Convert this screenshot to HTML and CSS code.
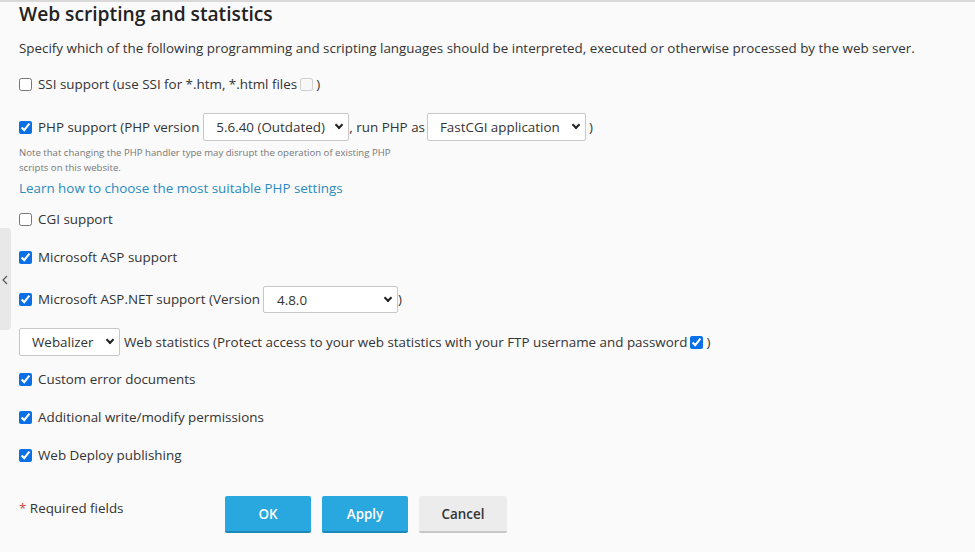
FILE: index.html
```html
<!DOCTYPE html>
<html>
<head>
<meta charset="utf-8">
<link rel="stylesheet" href="styles.css">
</head>
<body>
<div class="page">
  <div class="side-tab">
    <svg width="6" height="10" viewBox="0 0 6 10"><path d="M5 1 L1 5 L5 9" fill="none" stroke="#555" stroke-width="1.2"/></svg>
  </div>
  <form class="form">
    <h1 class="title">Web scripting and statistics</h1>
    <p class="desc">Specify which of the following programming and scripting languages should be interpreted, executed or otherwise processed by the web server.</p>

    <div class="row r-ssi">
      <input type="checkbox" class="cb">
      <span>SSI support (use SSI for *.htm, *.html files</span>
      <input type="checkbox" class="cb cb-inline" disabled>
      <span>)</span>
    </div>

    <div class="row r-php">
      <input type="checkbox" class="cb" checked>
      <span>PHP support (PHP version</span>
      <div class="select s-php">5.6.40 (Outdated)<span class="chev"></span></div>
      <span>, run PHP as</span>
      <div class="select s-handler">FastCGI application<span class="chev"></span></div>
      <span>)</span>
    </div>
    <p class="note">Note that changing the PHP handler type may disrupt the operation of existing PHP scripts on this website.</p>
    <a class="link" href="#">Learn how to choose the most suitable PHP settings</a>

    <div class="row r-cgi">
      <input type="checkbox" class="cb">
      <span>CGI support</span>
    </div>

    <div class="row r-gap">
      <input type="checkbox" class="cb" checked>
      <span>Microsoft ASP support</span>
    </div>

    <div class="row r-net">
      <input type="checkbox" class="cb" checked>
      <span>Microsoft ASP.NET support (Version</span>
      <div class="select s-net">4.8.0<span class="chev"></span></div>
      <span class="paren-tight">)</span>
    </div>

    <div class="row r-stats">
      <div class="select s-stats">Webalizer<span class="chev"></span></div>
      <span>Web statistics (Protect access to your web statistics with your FTP username and password</span>
      <input type="checkbox" class="cb cb-inline" checked>
      <span>)</span>
    </div>

    <div class="row r-custom">
      <input type="checkbox" class="cb" checked>
      <span>Custom error documents</span>
    </div>

    <div class="row r-gap">
      <input type="checkbox" class="cb" checked>
      <span>Additional write/modify permissions</span>
    </div>

    <div class="row r-gap">
      <input type="checkbox" class="cb" checked>
      <span>Web Deploy publishing</span>
    </div>

    <div class="footer">
      <div class="required"><span class="star">*</span> Required fields</div>
      <div class="buttons">
        <button type="button" class="btn btn-primary">OK</button>
        <button type="button" class="btn btn-primary">Apply</button>
        <button type="button" class="btn btn-default">Cancel</button>
      </div>
    </div>
  </form>
</div>
</body>
</html>
```

FILE: styles.css
```css
* { box-sizing: border-box; }

html, body {
  margin: 0;
  padding: 0;
  background: #fafafa;
}

body {
  font-family: "Open Sans", "Liberation Sans", sans-serif;
  color: #222;
  font-size: 13.4px;
  width: 975px;
  height: 552px;
  overflow: hidden;
}

.page {
  position: relative;
  border-top: 2px solid #d9d9d9;
  height: 552px;
}

.side-tab {
  position: absolute;
  left: 0;
  top: 226px;
  width: 11px;
  height: 102px;
  background: #e8e8e8;
  border-radius: 0 4px 4px 0;
  display: flex;
  align-items: center;
  justify-content: center;
  padding-right: 2px;
  padding-top: 2px;
}

.form {
  padding-left: 19px;
  display: flex;
  flex-direction: column;
  align-items: flex-start;
}

.title {
  margin: 0;
  font-size: 19.2px;
  line-height: 24px;
  font-weight: 600;
  color: #222;
}

.desc {
  margin: 12px 0 0;
  line-height: 20px;
  color: #333;
}

.row {
  display: flex;
  align-items: center;
  height: 20px;
  white-space: nowrap;
  color: #333;
}

.r-ssi { margin-top: 16px; }
.r-php { margin-top: 19px; height: 28px; }
.r-cgi { margin-top: 11px; }
.r-gap { margin-top: 18px; }
.r-net { margin-top: 18px; height: 28px; }
.r-stats { margin-top: 15px; height: 28px; }
.r-custom { margin-top: 13px; }

.cb {
  width: 13px;
  height: 13px;
  margin: 0 6px 0 0;
  accent-color: #0b6fe8;
  flex: none;
}

.cb-inline {
  margin: 0 3px 0 3px;
}

.select {
  position: relative;
  height: 28px;
  background: #fff;
  border: 1px solid #c8c8c8;
  border-radius: 2px;
  font-size: 13.4px;
  line-height: 26px;
  color: #333;
  padding-left: 12px;
  flex: none;
}

.chev {
  position: absolute;
  right: 6px;
  top: 11px;
  width: 6px;
  height: 6px;
  border-right: 2px solid #222;
  border-bottom: 2px solid #222;
  transform: rotate(45deg);
  margin-top: -3px;
}

.s-php { width: 146px; margin: 0 0 0 4px; }
.s-handler { width: 159px; margin: 0 3px 0 2px; }
.s-net { width: 135px; height: 27px; margin-left: 3px; padding-left: 13px; }
.s-stats { width: 101px; height: 28px; margin-right: 4px; }

.paren-tight { margin-left: 0; }

.note {
  margin: 4px 0 0;
  width: 380px;
  font-size: 9.6px;
  line-height: 15px;
  color: #777;
}

.link {
  margin-top: 3px;
  line-height: 20px;
  color: #2a8bbf;
  text-decoration: none;
}

.footer {
  margin-top: 31px;
  display: flex;
  align-items: flex-start;
}

.required {
  width: 206px;
  margin-top: 2px;
  line-height: 20px;
  color: #333;
}

.star {
  color: #d0473d;
}

.buttons {
  display: flex;
  gap: 11px;
}

.btn {
  height: 37px;
  border: none;
  border-radius: 2px;
  font-family: "Open Sans", "Liberation Sans", sans-serif;
  font-size: 13.4px;
  font-weight: 600;
  padding: 0;
  cursor: pointer;
}

.btn-primary {
  width: 86px;
  background: #28a8de;
  color: #fff;
  border-bottom: 2px solid #1a88b8;
}

.btn-default {
  width: 88px;
  background: #ececec;
  color: #333;
  border-bottom: 2px solid #c6c6c6;
}
```
